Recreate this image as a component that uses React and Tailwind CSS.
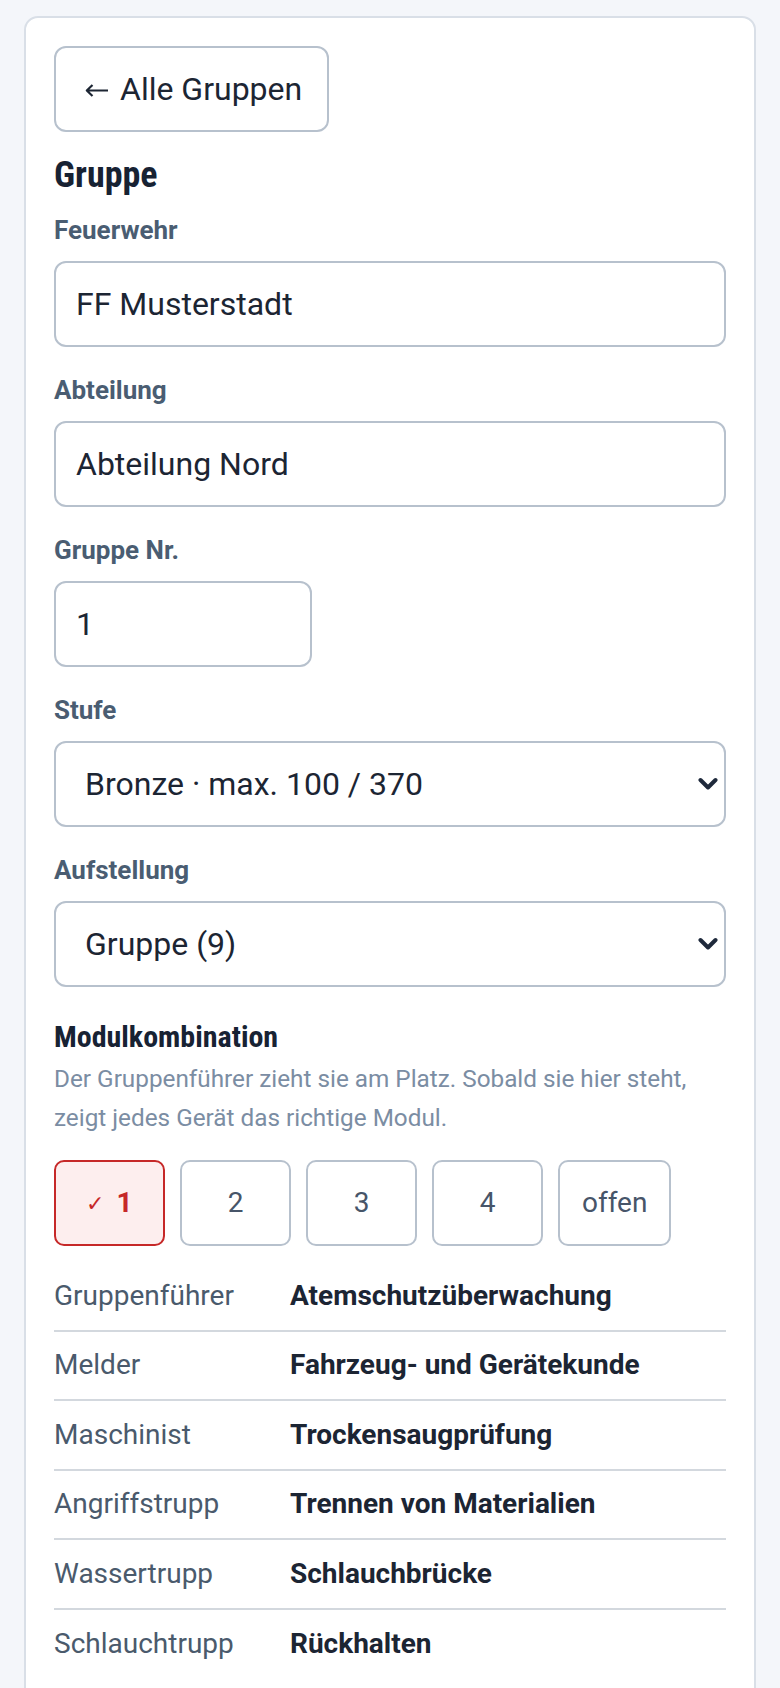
import { useState } from "react"

const roles = [
  ["Gruppenführer", "Atemschutzüberwachung"],
  ["Melder", "Fahrzeug- und Gerätekunde"],
  ["Maschinist", "Trockensaugprüfung"],
  ["Angriffstrupp", "Trennen von Materialien"],
  ["Wassertrupp", "Schlauchbrücke"],
  ["Schlauchtrupp", "Rückhalten"],
]

const combos = ["1", "2", "3", "4", "offen"]

function Label({ children }) {
  return (
    <label className="block text-[26px] leading-[34px] font-bold text-[#4a5d72] mb-[14px]">
      {children}
    </label>
  )
}

function Chevron() {
  return (
    <svg
      className="absolute right-[8px] top-1/2 -translate-y-1/2 pointer-events-none"
      width="20"
      height="13"
      viewBox="0 0 20 13"
      fill="none"
    >
      <path d="M2.5 2.5 L10 10 L17.5 2.5" stroke="#1e293b" strokeWidth="4" strokeLinecap="round" strokeLinejoin="round" />
    </svg>
  )
}

function ArrowLeft() {
  return (
    <svg width="24" height="13" viewBox="0 0 24 13" fill="none" className="mr-[11px] mt-[2px]">
      <path d="M23 6.5 H2 M7.5 1 L1.8 6.5 L7.5 12" stroke="#1c2533" strokeWidth="2.2" strokeLinejoin="round" />
    </svg>
  )
}

export default function App() {
  const [combo, setCombo] = useState("1")

  const inputCls =
    "block w-full h-[86px] px-[20px] border-2 border-[#b7c1cd] rounded-[12px] bg-white text-[32px] text-[#1c2533] outline-none"
  const selectCls =
    "block w-full h-[86px] pl-[29px] pr-[40px] border-2 border-[#b7c1cd] rounded-[12px] bg-white text-[32px] text-[#1c2533] appearance-none outline-none"

  return (
    <div className="min-h-screen bg-[#f4f6fa] pt-4 px-6 font-['Roboto',sans-serif]">
      <div className="bg-white border-2 border-[#d9dfe7] rounded-[14px] p-7">
        <button
          type="button"
          className="h-[86px] pl-[29px] pr-[25px] border-2 border-[#b7c1cd] rounded-[12px] bg-white text-[32px] text-[#1c2533] flex items-center"
        >
          <ArrowLeft />
          Alle Gruppen
        </button>

        <h2 className="mt-[19px] text-[36px] leading-[48px] font-bold text-[#172233] font-['Roboto_Condensed','Roboto',sans-serif] font-stretch-condensed">
          Gruppe
        </h2>

        <div className="mt-[14px]">
          <Label>Feuerwehr</Label>
          <input className={inputCls} defaultValue="FF Musterstadt" />
        </div>

        <div className="mt-[26px]">
          <Label>Abteilung</Label>
          <input className={inputCls} defaultValue="Abteilung Nord" />
        </div>

        <div className="mt-[26px]">
          <Label>Gruppe Nr.</Label>
          <input
            className="block w-[258px] h-[86px] px-[20px] border-2 border-[#b7c1cd] rounded-[12px] bg-white text-[32px] text-[#1c2533] outline-none"
            defaultValue="1"
          />
        </div>

        <div className="mt-[26px]">
          <Label>Stufe</Label>
          <div className="relative">
            <select className={selectCls} defaultValue="bronze">
              <option value="bronze">Bronze · max. 100 / 370</option>
              <option value="silber">Silber</option>
              <option value="gold">Gold</option>
            </select>
            <Chevron />
          </div>
        </div>

        <div className="mt-[26px]">
          <Label>Aufstellung</Label>
          <div className="relative">
            <select className={selectCls} defaultValue="9">
              <option value="9">Gruppe (9)</option>
              <option value="6">Staffel (6)</option>
            </select>
            <Chevron />
          </div>
        </div>

        <h3 className="mt-[30px] text-[30px] leading-[40px] font-bold text-[#172233] font-['Roboto_Condensed','Roboto',sans-serif] font-stretch-condensed">
          Modulkombination
        </h3>
        <p className="mt-[2px] text-[24.3px] leading-[39px] text-[#7b8da3]">
          Der Gruppenführer zieht sie am Platz. Sobald sie hier steht, zeigt jedes Gerät das richtige Modul.
        </p>

        <div className="mt-[23px] flex gap-[15px]">
          {combos.map((c) => {
            const active = combo === c
            return (
              <button
                key={c}
                type="button"
                onClick={() => setCombo(c)}
                className={
                  active
                    ? "h-[86px] min-w-[111px] px-[22px] border-2 border-[#c62828] rounded-[10px] bg-[#fdeeee] text-[28px] font-bold text-[#c62828] flex items-center justify-center"
                    : "h-[86px] min-w-[111px] px-[22px] border-2 border-[#b7c1cd] rounded-[10px] bg-white text-[28px] text-[#475569] flex items-center justify-center"
                }
              >
                {active && <span className="text-[22px] font-normal mr-[12px]">✓</span>}
                {c}
              </button>
            )
          })}
        </div>

        <div className="mt-[16px]">
          {roles.map(([role, module], i) => (
            <div
              key={role}
              className={
                i < roles.length - 1
                  ? "grid grid-cols-[236px_1fr] items-center h-[69.5px] border-b-2 border-[#d3d8de]"
                  : "grid grid-cols-[236px_1fr] items-center h-[69.5px]"
              }
            >
              <span className="text-[28px] text-[#4a5a6c]">{role}</span>
              <span className="text-[28px] font-bold text-[#1c2533]">{module}</span>
            </div>
          ))}
        </div>
      </div>
    </div>
  )
}
